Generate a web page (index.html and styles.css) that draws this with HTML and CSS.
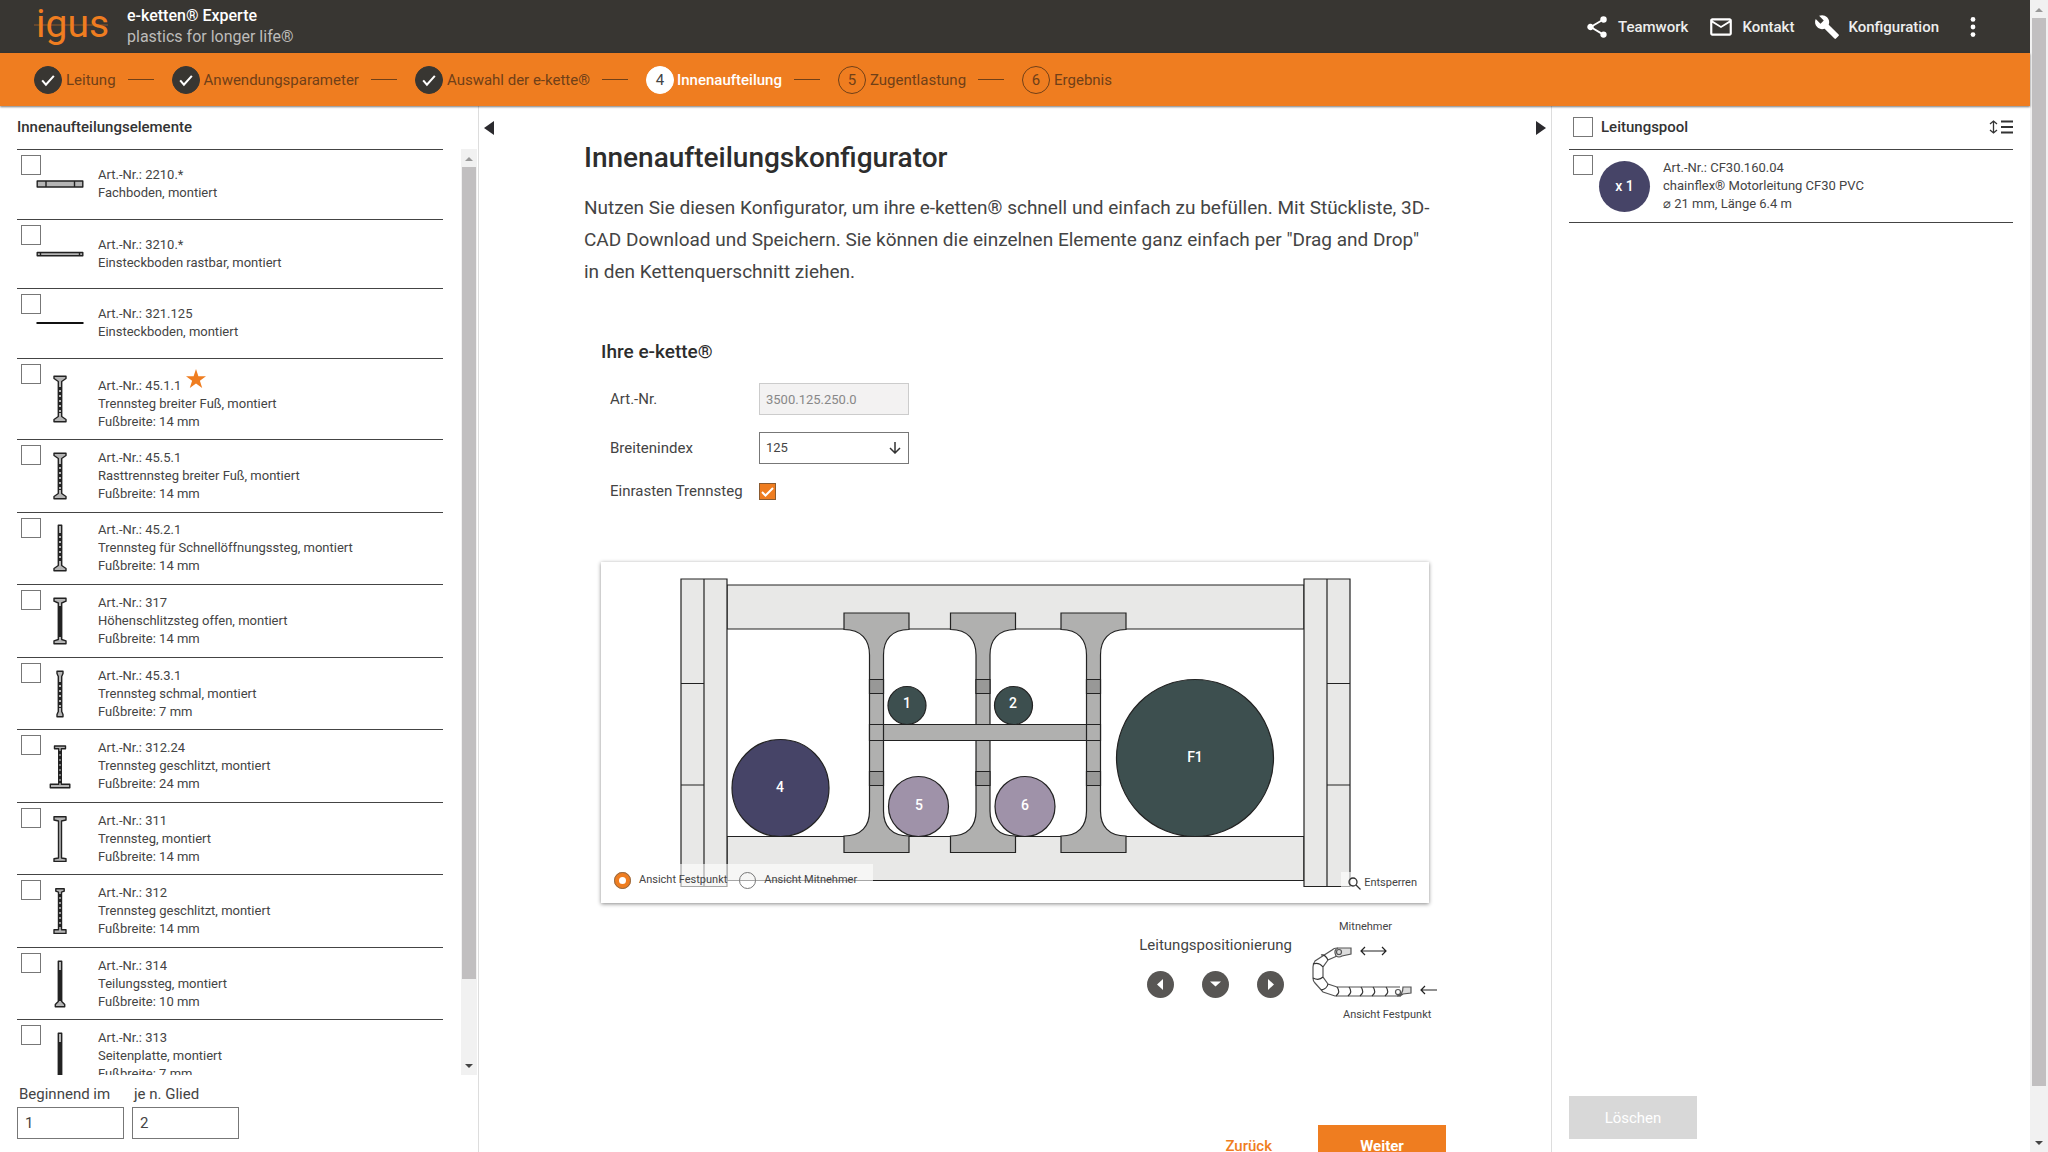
FILE: index.html
```html
<!DOCTYPE html>
<html lang="de">
<head>
<meta charset="utf-8">
<title>e-ketten® Experte</title>
<link rel="stylesheet" href="styles.css">
</head>
<body>
<svg class="sprite" aria-hidden="true">
  <symbol id="check" viewBox="0 0 24 24"><path d="M5 12.500l4.500 5L19 7" fill="none" stroke="#fff" stroke-width="2.500"/></symbol>
  <symbol id="p2210" viewBox="0 0 48 48"><path class="part" d="M1.200 21h45.600v6H1.200zM10 21v6M38.500 21v6"/></symbol>
  <symbol id="p3210" viewBox="0 0 48 48"><path class="part" d="M1.200 22.500h45.600v3.200H1.200zM4.500 22.500v3M43.500 22.500v3"/></symbol>
  <symbol id="p321" viewBox="0 0 48 48"><path d="M.5 24h47" stroke="#111" stroke-width="2"/></symbol>
  <symbol id="p4511" viewBox="0 0 48 48"><path class="part" d="M18 1.200h12v2.300l-4.300 3v35l4.300 3v2.300H18v-2.300l4.300-3v-35l-4.300-3z"/><path class="slots" d="M24 12v26"/></symbol>
  <symbol id="p4521" viewBox="0 0 48 48"><path class="part" d="M22.300 1.200h3.400v40.300l4.300 3v2.300H18v-2.300l4.300-3z"/><path class="slots" d="M24 9v28"/></symbol>
  <symbol id="p317" viewBox="0 0 48 48"><path class="part" d="M18 1.200h12v3l-4.300 1.800v36.500l4.300 1.300v3H18v-3l4.300-1.300V6L18 4.200z"/><path d="M24 9v31" stroke="#222" stroke-width="3"/></symbol>
  <symbol id="p4531" viewBox="0 0 48 48"><path class="part" d="M21 1.200h6v2.300l-1.300 3v35l1.300 3v2.300h-6v-2.300l1.300-3v-35l-1.300-3z"/><path class="slots" d="M24 12v26"/></symbol>
  <symbol id="p31224" viewBox="0 0 48 48"><path class="part" d="M18.500 4h11v2.800h-4.200v35.400h8.500v3.600H14.300v-3.600h8.400V6.800h-4.200z"/><path class="slots" d="M24 9v32"/></symbol>
  <symbol id="p311" viewBox="0 0 48 48"><path class="part" d="M18 1.800h12v3.200l-4.500 1v37l4.500.8v2.600H18v-2.600l4.500-.8V6L18 5z"/></symbol>
  <symbol id="p312" viewBox="0 0 48 48"><path class="part" d="M19.800 1.800h8.400v2.400l-2.700 1v37.600h4.500v3.600H18v-3.600h4.500V5.200l-2.700-1z"/><path class="slots" d="M24 7v34"/></symbol>
  <symbol id="p314" viewBox="0 0 48 48"><path class="part" d="M22.300 1.200h3.400v40.300l3 3v2.300h-9.400v-2.300l3-3z"/><path d="M24 10v31" stroke="#222" stroke-width="3"/></symbol>
  <symbol id="p313" viewBox="0 0 48 48"><path class="part" d="M22.300 1.200h3.400v45.600h-3.400z"/><path d="M24 10v36" stroke="#222" stroke-width="3"/></symbol>
</svg>

<div class="app">
  <header class="topbar">
    <svg class="logo" viewBox="0 0 74 46" role="img" aria-label="igus"><text x="2" y="33">igus</text><path d="M0 21h74" stroke="#ef7d20" stroke-opacity=".5"/></svg>
    <div class="brand"><strong>e-ketten® Experte</strong><span>plastics for longer life®</span></div>
    <nav class="topnav">
      <a href="#"><svg viewBox="0 0 24 24" fill="#fff"><path d="M18 16.080c-.76 0-1.440.3-1.960.77L8.910 12.700c.05-.23.09-.46.09-.7s-.04-.47-.09-.7l7.050-4.110c.54.5 1.250.81 2.040.81a3 3 0 1 0-3-3c0 .24.04.47.09.7L8.040 9.810A3 3 0 1 0 6 15c.79 0 1.500-.31 2.040-.81l7.120 4.160c-.05.21-.08.43-.08.65a2.920 2.920 0 1 0 2.920-2.920z"/></svg>Teamwork</a>
      <a href="#"><svg viewBox="0 0 24 24" fill="#fff"><path d="M22 6c0-1.100-.9-2-2-2H4c-1.100 0-2 .9-2 2v12c0 1.100.9 2 2 2h16c1.100 0 2-.9 2-2V6zm-2 0l-8 5-8-5h16zm0 12H4V8l8 5 8-5v10z"/></svg>Kontakt</a>
      <a href="#"><svg viewBox="0 0 24 24" fill="#fff"><path d="M22.700 19l-9.100-9.100c.9-2.300.4-5-1.500-6.900-2-2-5-2.400-7.400-1.300L9 6 6 9 1.600 4.700C.4 7.100.9 10.100 2.900 12.100c1.900 1.900 4.600 2.400 6.900 1.500l9.100 9.100c.4.400 1 .4 1.400 0l2.300-2.300c.5-.4.500-1.100.1-1.400z"/></svg>Konfiguration</a>
      <button class="more" aria-label="Mehr"><svg viewBox="0 0 24 24" fill="#fff"><circle cx="12" cy="5" r="2.200"/><circle cx="12" cy="12" r="2.200"/><circle cx="12" cy="19" r="2.200"/></svg></button>
    </nav>
  </header>

  <ol class="stepper">
    <li class="step done"><span class="dot"><svg><use href="#check"/></svg></span>Leitung</li>
    <li class="step done"><span class="dot"><svg><use href="#check"/></svg></span>Anwendungsparameter</li>
    <li class="step done"><span class="dot"><svg><use href="#check"/></svg></span>Auswahl der e-kette®</li>
    <li class="step active"><span class="dot">4</span>Innenaufteilung</li>
    <li class="step"><span class="dot">5</span>Zugentlastung</li>
    <li class="step"><span class="dot">6</span>Ergebnis</li>
  </ol>

  <main class="workspace">
    <aside class="parts">
      <h2>Innenaufteilungselemente</h2>
      <div class="parts-body">
        <ul class="part-list">
          <li><input type="checkbox" class="box" id="a1"><svg class="thumb"><use href="#p2210"/></svg><label for="a1"><span>Art.-Nr.: 2210.*</span><span>Fachboden, montiert</span></label></li>
          <li><input type="checkbox" class="box" id="a2"><svg class="thumb"><use href="#p3210"/></svg><label for="a2"><span>Art.-Nr.: 3210.*</span><span>Einsteckboden rastbar, montiert</span></label></li>
          <li><input type="checkbox" class="box" id="a3"><svg class="thumb"><use href="#p321"/></svg><label for="a3"><span>Art.-Nr.: 321.125</span><span>Einsteckboden, montiert</span></label></li>
          <li><input type="checkbox" class="box" id="a4"><svg class="thumb"><use href="#p4511"/></svg><label for="a4"><span class="starred">Art.-Nr.: 45.1.1<svg class="star" viewBox="0 0 20 28"><path d="M10 2l2.400 7.200H20l-6.100 4.500 2.300 7.300L10 16.500 3.800 21l2.300-7.300L0 9.200h7.600z" fill="#ef7d20"/></svg></span><span>Trennsteg breiter Fuß, montiert</span><span>Fußbreite: 14 mm</span></label></li>
          <li><input type="checkbox" class="box" id="a5"><svg class="thumb"><use href="#p4511"/></svg><label for="a5"><span>Art.-Nr.: 45.5.1</span><span>Rasttrennsteg breiter Fuß, montiert</span><span>Fußbreite: 14 mm</span></label></li>
          <li><input type="checkbox" class="box" id="a6"><svg class="thumb"><use href="#p4521"/></svg><label for="a6"><span>Art.-Nr.: 45.2.1</span><span>Trennsteg für Schnellöffnungssteg, montiert</span><span>Fußbreite: 14 mm</span></label></li>
          <li><input type="checkbox" class="box" id="a7"><svg class="thumb"><use href="#p317"/></svg><label for="a7"><span>Art.-Nr.: 317</span><span>Höhenschlitzsteg offen, montiert</span><span>Fußbreite: 14 mm</span></label></li>
          <li><input type="checkbox" class="box" id="a8"><svg class="thumb"><use href="#p4531"/></svg><label for="a8"><span>Art.-Nr.: 45.3.1</span><span>Trennsteg schmal, montiert</span><span>Fußbreite: 7 mm</span></label></li>
          <li><input type="checkbox" class="box" id="a9"><svg class="thumb"><use href="#p31224"/></svg><label for="a9"><span>Art.-Nr.: 312.24</span><span>Trennsteg geschlitzt, montiert</span><span>Fußbreite: 24 mm</span></label></li>
          <li><input type="checkbox" class="box" id="a10"><svg class="thumb"><use href="#p311"/></svg><label for="a10"><span>Art.-Nr.: 311</span><span>Trennsteg, montiert</span><span>Fußbreite: 14 mm</span></label></li>
          <li><input type="checkbox" class="box" id="a11"><svg class="thumb"><use href="#p312"/></svg><label for="a11"><span>Art.-Nr.: 312</span><span>Trennsteg geschlitzt, montiert</span><span>Fußbreite: 14 mm</span></label></li>
          <li><input type="checkbox" class="box" id="a12"><svg class="thumb"><use href="#p314"/></svg><label for="a12"><span>Art.-Nr.: 314</span><span>Teilungssteg, montiert</span><span>Fußbreite: 10 mm</span></label></li>
          <li><input type="checkbox" class="box" id="a13"><svg class="thumb"><use href="#p313"/></svg><label for="a13"><span>Art.-Nr.: 313</span><span>Seitenplatte, montiert</span><span>Fußbreite: 7 mm</span></label></li>
        </ul>
        <div class="scrollbar list-scrollbar" aria-hidden="true"><i class="up"></i><b></b><i class="down"></i></div>
      </div>
      <div class="interval">
        <div><label for="start">Beginnend im</label><input id="start" type="text" value="1"></div>
        <div><label for="every">je n. Glied</label><input id="every" type="text" value="2"></div>
      </div>
    </aside>

    <section class="center">
      <button class="collapse" aria-label="Elemente einklappen"><svg viewBox="0 0 12 14"><path d="M11 0v14L1 7z" fill="#2b2a2e"/></svg></button>
      <div class="config">
        <h1>Innenaufteilungskonfigurator</h1>
        <p class="intro">Nutzen Sie diesen Konfigurator, um ihre e-ketten® schnell und einfach zu befüllen. Mit Stückliste, 3D-CAD Download und Speichern. Sie können die einzelnen Elemente ganz einfach per "Drag and Drop" in den Kettenquerschnitt ziehen.</p>
        <div class="chain">
          <h3>Ihre e-kette®</h3>
          <div class="fields">
            <label for="art">Art.-Nr.</label><input id="art" class="field" type="text" value="3500.125.250.0" disabled>
            <label for="width">Breitenindex</label><select id="width" class="field"><option>125</option></select>
            <label for="snap">Einrasten Trennsteg</label><input id="snap" class="tick" type="checkbox" checked>
          </div>
          <div class="canvas">
            <svg class="section" viewBox="601 562 828 341">
              <g fill="#e8e8e7" stroke="#222" stroke-width="1.200">
                <path d="M727 585h577v44H727zM727 836.500h577v44H727z"/>
                <path d="M681 579h46v307.500h-46zM704 579v307.500M681 683.500h23M681 785h23"/>
                <path d="M1304 579h46v307.500h-46zM1327 579v307.500M1327 683.500h23M1327 785h23"/>
              </g>
              <defs>
                <g id="web">
                  <path d="M-32.500 613h65v16.500C15 629.500 7 640 7 655v156C7 826 15 836 32.500 836v16.500h-65V836C-15 836-7 826-7 811V655C-7 640-15 629.500-32.500 629.500z" fill="#b0b0af"/>
                  <path d="M-7 679.500H7v14H-7zM-7 771.500H7v14H-7z" fill="#989897"/>
                </g>
              </defs>
              <g stroke="#222" stroke-width="1.200">
                <use href="#web" x="876.500"/><use href="#web" x="983"/><use href="#web" x="1093.500"/>
                <path d="M869.500 724.500h231v16h-231zM883.500 724.500v16M1086.500 724.500v16" fill="#b0b0af"/>
                <circle cx="907" cy="705.500" r="19" fill="#3d4f4f"/>
                <circle cx="1013.500" cy="705.500" r="19" fill="#3d4f4f"/>
                <circle cx="780.500" cy="788" r="48.500" fill="#464467"/>
                <circle cx="918.500" cy="806.500" r="30" fill="#9f92a9"/>
                <circle cx="1025" cy="806.500" r="30" fill="#9f92a9"/>
                <circle cx="1195" cy="758" r="78.500" fill="#3d4f4f"/>
              </g>
              <g class="cable-no">
                <text x="907" y="708">1</text><text x="1013" y="708">2</text><text x="780" y="792">4</text><text x="919" y="810">5</text><text x="1025" y="810">6</text><text x="1195" y="762">F1</text>
              </g>
            </svg>
            <div class="views">
              <label><input type="radio" name="view" checked>Ansicht Festpunkt</label>
              <label><input type="radio" name="view">Ansicht Mitnehmer</label>
            </div>
            <button class="unlock"><svg viewBox="0 0 13 13" fill="none" stroke="#333" stroke-width="1.300"><circle cx="5" cy="5" r="4"/><path d="M8 8l4.500 4.500"/></svg>Entsperren</button>
          </div>
        </div>
        <div class="below">
          <div class="position">
            <span>Leitungspositionierung</span>
            <div>
              <button aria-label="Links"><svg viewBox="0 0 27 27"><path d="M16 8v11l-6-5.500z" fill="#fff"/></svg></button>
              <button aria-label="Unten"><svg viewBox="0 0 27 27"><path d="M8 10.500h11l-5.500 5z" fill="#fff"/></svg></button>
              <button aria-label="Rechts"><svg viewBox="0 0 27 27"><path d="M11 8v11l6-5.500z" fill="#fff"/></svg></button>
            </div>
          </div>
          <figure class="chain-view">
            <span class="mover">Mitnehmer</span>
            <svg viewBox="0 0 125 70" fill="none" stroke="#555" stroke-width="1.200">
              <path d="M26 12h-1q-3 0-5 2L3 25q-2 3-2 6v11q0 3 2 5l8 9 12 4h66M28 20h-3l-9 4-5 7v10l5 7 9 3h63"/>
              <path d="M9 19q4-1 7 5M1 28q6-2 10 3M1 42q6 3 10-1M9 54q6-1 7-6M24 60q5-4 1-9M36 60q5-4 1-9M48 60q5-4 1-9M60 60q5-4 1-9M73 60q5-4 1-9" stroke="#333"/>
              <path d="M24 20q-3-6 2-8h13v6l-9 2q-3 2-6 0zM85 60q6-1 6-9h8v6l-8 1q-2 2-6 2z" fill="#ddd"/>
              <circle cx="27" cy="16" r="2.500"/><circle cx="86" cy="56" r="2.500"/>
              <path d="M49 15h25M53 11l-4 4 4 4M70 11l4 4-4 4M109 54h16M113 50l-4 4 4 4" stroke="#222"/>
            </svg>
            <span class="fixed">Ansicht Festpunkt</span>
          </figure>
        </div>
        <div class="actions"><a href="#">Zurück</a><button>Weiter</button></div>
      </div>
      <button class="collapse" aria-label="Leitungspool einklappen"><svg viewBox="0 0 12 14"><path d="M1 0v14l10-7z" fill="#2b2a2e"/></svg></button>
    </section>

    <aside class="pool">
      <div class="pool-head">
        <input type="checkbox" class="box" id="all"><label for="all">Leitungspool</label>
        <button aria-label="Sortieren"><svg viewBox="0 0 24 14" fill="none" stroke="#333"><path d="M4.500 1v12M1 4l3.500-3L8 4M1 10l3.500 3L8 10" stroke-width="1.300"/><path d="M12 1.500h12M12 7h12M12 12.500h12" stroke-width="2"/></svg></button>
      </div>
      <div class="cable">
        <input type="checkbox" class="box" id="c1"><span class="count">x 1</span>
        <label for="c1"><span>Art.-Nr.: CF30.160.04</span><span>chainflex® Motorleitung CF30 PVC</span><span>⌀ 21 mm, Länge 6.4 m</span></label>
      </div>
      <button class="delete" disabled>Löschen</button>
    </aside>
  </main>
</div>
<div class="scrollbar page-scrollbar" aria-hidden="true"><i class="up"></i><b></b><i class="down"></i></div>
</body>
</html>
```
FILE: styles.css
```css
* { box-sizing: border-box; }
body {
  margin: 0;
  height: 100vh;
  display: flex;
  overflow: hidden;
  background: #fff;
  color: #444;
  font: 15px/20px Roboto, "Liberation Sans", sans-serif;
}
button, input, select { font: inherit; color: inherit; margin: 0; }
button { border: 0; padding: 0; background: none; display: flex; align-items: center; justify-content: center; }
h1, h2, h3, p, ul, ol, figure { margin: 0; padding: 0; list-style: none; }
a { color: inherit; text-decoration: none; }
.sprite { position: absolute; width: 0; height: 0; }
.app { flex: 1; min-width: 0; display: flex; flex-direction: column; }

/* Header */
.topbar { height: 53px; display: flex; align-items: center; padding: 0 44px 0 34px; background: #383632; color: #fff; }
.logo { width: 74px; height: 46px; overflow: visible; }
.logo text { font: 400 39px Roboto, sans-serif; fill: #ef7d20; }
.brand { display: flex; flex-direction: column; margin-left: 19px; padding-bottom: 2px; font-size: 16px; line-height: 21px; }
.brand strong { font-weight: 500; }
.brand span { color: #bdbcba; }
.topnav { display: flex; align-items: center; gap: 20px; margin-left: auto; }
.topnav a { display: flex; align-items: center; gap: 8px; font-weight: 500; color: #eee; }
.topnav svg { width: 26px; height: 26px; }
.more { margin-left: 1px; }

/* Stepper */
.stepper {
  position: relative;
  height: 53px;
  display: flex;
  align-items: center;
  padding-left: 34px;
  background: #ef7d20;
  box-shadow: 0 1px 2px #0008;
  color: #704018;
}
.step { display: flex; align-items: center; }
.step:not(:last-child)::after { content: ""; width: 26px; height: 1px; margin: 0 18px 0 12px; background: #704018; }
.dot { width: 28px; height: 28px; margin-right: 4px; border: 1px solid #704018; border-radius: 50%; display: flex; align-items: center; justify-content: center; }
.dot svg { width: 20px; height: 20px; }
.done .dot { background: #383632; border-color: #383632; }
.active { color: #fff; font-weight: 500; }
.active .dot { background: #fff; border-color: #fff; color: #444; font-weight: 400; margin-right: 3px; }

.workspace { flex: 1; min-height: 0; display: grid; grid-template-columns: 479px 1fr 479px; }
.workspace > * { min-height: 0; overflow: hidden; }

.box { appearance: none; width: 20px; height: 20px; border: 1px solid #777; background: #fff; flex: none; }

/* Parts list */
.parts { display: flex; flex-direction: column; border-right: 1px solid #ddd; }
.parts h2 { height: 43px; padding: 11px 17px 0; font-size: 15px; font-weight: 500; color: #333; }
.parts-body { flex: 1; min-height: 0; overflow: hidden; display: flex; justify-content: space-between; padding: 0 1px 0 17px; }
.part-list { width: 426px; height: 943px; display: grid; grid-template-rows: repeat(3, 139fr) 163fr repeat(9, 145fr); }
.part-list li { display: flex; align-items: center; border-top: 1px solid #444; padding-left: 4px; font-size: 13px; line-height: 18px; }
.part-list .box { align-self: flex-start; margin-top: 5px; }
.thumb { width: 48px; height: 48px; margin: 0 14px 0 -5px; flex: none; }
.part-list label span, .cable label span { display: block; }
.part-list .starred { display: flex; align-items: flex-end; gap: 5px; }
.star { width: 20px; height: 28px; }
.part { fill: #b5b5b5; stroke: #222; stroke-width: 1.4; stroke-linejoin: round; }
.slots { fill: none; stroke: #222; stroke-width: 2; stroke-dasharray: 3 2; }
.interval { display: flex; gap: 8px; padding: 9px 17px 13px; }
.interval div { width: 107px; }
.interval label { display: block; padding-left: 2px; margin-bottom: 3px; }
.interval input { width: 100%; height: 32px; border: 1px solid #777; padding: 0 7px; }

/* Scrollbars */
.scrollbar { display: flex; flex-direction: column; align-items: center; background: #f1f1f1; flex: none; }
.scrollbar i { width: 0; height: 0; border: 4px solid transparent; }
.scrollbar .up { border-bottom-color: #999; border-top: 0; margin: 8px 0 6px; }
.scrollbar .down { border-top-color: #444; border-bottom: 0; margin: auto 0 7px; }
.scrollbar b { width: 14px; background: #c1bfc0; }
.list-scrollbar { width: 16px; }
.list-scrollbar b { height: calc(88% - 3px); }
.page-scrollbar { width: 18px; }
.page-scrollbar b { height: calc(93% - 3px); }

/* Configurator */
.center { display: grid; grid-template-columns: 20px minmax(0, 862px) 20px; justify-content: space-between; }
.collapse { align-self: start; height: 14px; margin-top: 15px; }
.collapse svg { width: 12px; height: 14px; }
.config { padding-top: 34px; }
h1 { font-size: 28px; line-height: 36px; font-weight: 500; color: #2d2d2d; }
.intro { max-width: 852px; margin-top: 16px; font-size: 19px; line-height: 32px; }
.chain { padding: 0 17px; }
h3 { margin-top: 52px; font-size: 19px; line-height: 24px; font-weight: 500; color: #2d2d2d; }
.fields { display: grid; grid-template-columns: 149px 150px; gap: 17px 0; align-items: center; margin-top: 19px; padding-left: 9px; }
.field { height: 32px; width: 150px; border: 1px solid #777; padding: 0 6px; font-size: 13px; background: #fff; }
.field:disabled { background: #f3f2f2; border-color: #ccc; color: #888; }
select.field {
  appearance: none;
  background: #fff url("data:image/svg+xml,%3Csvg xmlns='http://www.w3.org/2000/svg' width='12' height='12' fill='none' stroke='%23333' stroke-width='1.500'%3E%3Cpath d='M6 0v11M1 6l5 5 5-5'/%3E%3C/svg%3E") no-repeat right 7px center;
}
.tick {
  appearance: none;
  width: 17px;
  height: 17px;
  border: 1px solid #8a5a30;
  background: #ef7d20 url("data:image/svg+xml,%3Csvg xmlns='http://www.w3.org/2000/svg' width='15' height='15' fill='none' stroke='white' stroke-width='2'%3E%3Cpath d='M2 8l3.500 3.500L13 4'/%3E%3C/svg%3E") center no-repeat;
}
.canvas { position: relative; margin-top: 61px; box-shadow: 0 1px 4px #0007; background: #fff; }
.section { display: block; width: 100%; }
.cable-no text { font: 500 14px Roboto, sans-serif; fill: #fff; text-anchor: middle; }
.views { position: absolute; left: 0; bottom: 11px; display: flex; gap: 12px; padding: 7px 16px 3px 13px; background: #fff9; font-size: 11px; line-height: 18px; }
.views label { display: flex; align-items: center; gap: 8px; }
.views input { appearance: none; width: 17px; height: 17px; border: 1px solid #777; border-radius: 50%; }
.views input:checked { border: 5px solid #ef7d20; outline: 1px solid #8a6a4c; outline-offset: -1px; }
.unlock { position: absolute; right: 0; bottom: 9px; gap: 3px; padding: 0 12px 0 7px; background: #fff9; font-size: 11px; line-height: 22px; }
.unlock svg { width: 13px; height: 13px; }
.below { display: flex; justify-content: flex-end; gap: 20px; margin-top: 15px; padding-right: 9px; }
.position { padding-top: 17px; }
.position div { display: flex; justify-content: center; gap: 28px; margin-top: 16px; }
.position button { width: 27px; height: 27px; border-radius: 50%; background: #585654; }
.chain-view { width: 125px; font-size: 11px; line-height: 18px; }
.chain-view span, .chain-view svg { display: block; }
.mover { padding-left: 27px; }
.fixed { padding-left: 31px; }
.actions { display: flex; justify-content: flex-end; align-items: center; gap: 46px; margin-top: 101px; }
.actions a { color: #ef7d20; font-weight: 500; }
.actions button { width: 128px; height: 41px; background: #ef7d20; color: #fff; font-weight: 700; }

/* Cable pool */
.pool { display: flex; flex-direction: column; align-items: stretch; padding: 0 17px 13px; border-left: 1px solid #ddd; }
.pool-head { height: 43px; display: flex; align-items: center; gap: 8px; padding: 0 0 1px 4px; font-weight: 500; color: #333; }
.pool-head button { margin-left: auto; }
.pool-head button svg { width: 24px; height: 14px; }
.cable { height: 74px; display: flex; align-items: center; padding-left: 4px; border: solid #444; border-width: 1px 0; font-size: 13px; line-height: 18px; }
.cable .box { align-self: flex-start; margin-top: 5px; }
.count { width: 51px; height: 51px; margin: 0 13px 0 6px; border-radius: 50%; background: #464467; color: #fff; font-size: 14px; font-weight: 500; display: flex; align-items: center; justify-content: center; }
.delete { width: 128px; height: 43px; margin-top: auto; background: #d8d8d8; color: #fff; }
```
